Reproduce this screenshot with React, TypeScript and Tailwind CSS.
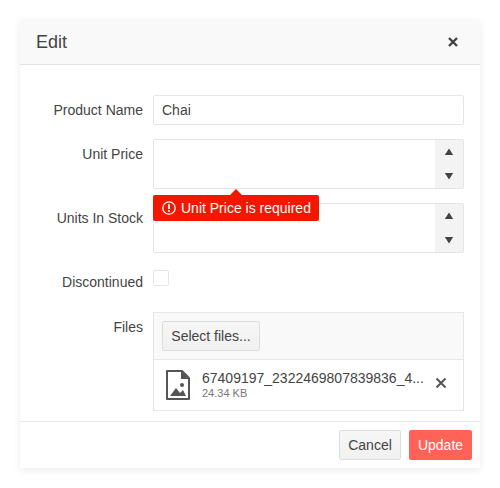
import React from "react";

const Spin = ({ up }: { up: boolean }) => (
  <div className="flex-1 flex items-center justify-center">
    <svg width="10" height="8" viewBox="0 0 10 8" className="block">
      <path d={up ? "M5 .5 L9.2 7 H.8 Z" : "M.8 1 H9.2 L5 7.5 Z"} fill="#444" />
    </svg>
  </div>
);

const Numeric = () => (
  <div className="h-[50px] w-[311px] border border-[#e6e6e6] rounded-[2px] bg-white flex">
    <div className="flex-1" />
    <div className="w-[28px] flex flex-col bg-[#f3f3f3]">
      <Spin up />
      <Spin up={false} />
    </div>
  </div>
);

const Label = ({ children, pt }: { children: React.ReactNode; pt: string }) => (
  <div className={`w-[123px] text-right shrink-0 text-[14px] leading-[20px] ${pt}`}>{children}</div>
);

export default function App() {
  return (
    <div className="w-[500px] h-[488px] bg-white pt-[20px] pl-[20px] text-[#444444] font-['Liberation_Sans',Arial,sans-serif]">
      <div className="w-[460px] h-[448px] bg-white flex flex-col shadow-[0_2px_8px_rgba(0,0,0,0.08)]">
        <div className="h-[45px] shrink-0 bg-[#f9f9f9] border-b border-[#e3e3e3] flex items-center justify-between pl-[16px] pr-[21px]">
          <span className="text-[18px] leading-[22px]">Edit</span>
          <svg width="12" height="12" viewBox="0 0 12 12" className="block">
            <path d="M2 2 L10 10 M10 2 L2 10" stroke="#444" strokeWidth="2.4" />
          </svg>
        </div>
        <div className="flex-1 pt-[30px] flex flex-col">
          <div className="flex gap-[10px]">
            <Label pt="pt-[5px]">Product Name</Label>
            <div className="h-[30px] w-[311px] border border-[#e6e6e6] rounded-[2px] bg-white px-[8px] text-[14px] leading-[28px]">Chai</div>
          </div>
          <div className="flex gap-[10px] mt-[14px] relative">
            <Label pt="pt-[5px]">Unit Price</Label>
            <Numeric />
            <div className="absolute left-[133px] top-[56px] h-[26px] w-[166px] bg-[#f31700] rounded-[2px] text-white text-[14px] flex items-center pl-[9px] gap-[5px] whitespace-nowrap">
              <svg width="14" height="14" viewBox="0 0 14 14" className="block shrink-0">
                <circle cx="7" cy="7" r="6.2" fill="none" stroke="#fff" strokeWidth="1.3" />
                <path d="M7 3.2 V8" stroke="#fff" strokeWidth="1.8" />
                <circle cx="7" cy="10" r="1" fill="#fff" />
              </svg>
              <span>Unit Price is required</span>
              <div className="absolute left-[77px] top-[-6px] w-0 h-0 border-x-[6px] border-x-transparent border-b-[6px] border-b-[#f31700]" />
            </div>
          </div>
          <div className="flex gap-[10px] mt-[14px]">
            <Label pt="pt-[5px]">Units In Stock</Label>
            <Numeric />
          </div>
          <div className="flex gap-[10px] mt-[17px]">
            <Label pt="pt-[2px]">Discontinued</Label>
            <div className="w-[16px] h-[16px] border border-[#e6e6e6] rounded-[2px] bg-white" />
          </div>
          <div className="flex gap-[10px] mt-[20px]">
            <Label pt="pt-[5px]">Files</Label>
            <div className="w-[311px] h-[99px] border border-[#e6e6e6] flex flex-col">
              <div className="h-[47px] shrink-0 bg-[#f9f9f9] border-b border-[#e6e6e6] flex items-center pl-[8px]">
                <div className="h-[30px] w-[98px] border border-[#dcdcdc] rounded-[2px] bg-gradient-to-b from-[#f6f6f6] to-[#f1f1f1] text-[14px] flex items-center justify-center">Select files...</div>
              </div>
              <div className="flex-1 flex items-start pl-[12px] pt-[9px]">
                <svg width="24" height="30" viewBox="0 0 24 30" className="block shrink-0 mt-[1px]">
                  <path d="M1 1 H16 L23 8 V29 H1 Z" fill="none" stroke="#555" strokeWidth="2" strokeLinejoin="round" />
                  <path d="M15 1 L23 9 H15 Z" fill="#555" />
                  <circle cx="16" cy="15" r="2" fill="#555" />
                  <path d="M4 26 L10 18 L14 23 L17 20 L20 26 Z" fill="#555" />
                </svg>
                <div className="ml-[12px] w-[224px]">
                  <div className="text-[14px] leading-[18px] truncate">67409197_2322469807839836_4...</div>
                  <div className="text-[11px] leading-[12px] text-[#777]">24.34 KB</div>
                </div>
                <svg width="12" height="12" viewBox="0 0 12 12" className="block ml-[9px] mt-[8px]">
                  <path d="M1.5 1.5 L10.5 10.5 M10.5 1.5 L1.5 10.5" stroke="#555" strokeWidth="2" />
                </svg>
              </div>
            </div>
          </div>
        </div>
        <div className="h-[47px] shrink-0 border-t border-[#e6e6e6] flex items-center justify-end gap-[8px] pr-[8px]">
          <div className="h-[30px] w-[62px] border border-[#dcdcdc] rounded-[2px] bg-gradient-to-b from-[#f6f6f6] to-[#f1f1f1] text-[14px] flex items-center justify-center">Cancel</div>
          <div className="h-[30px] w-[63px] rounded-[2px] bg-[#ff6358] text-white text-[14px] flex items-center justify-center">Update</div>
        </div>
      </div>
    </div>
  );
}
